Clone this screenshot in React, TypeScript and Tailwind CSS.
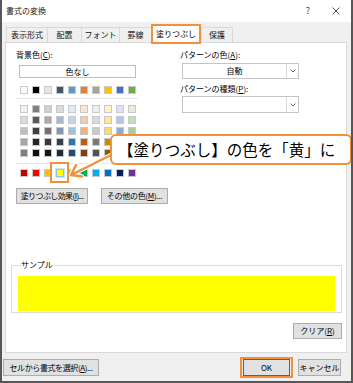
import React from 'react';

const themeRow = ['#ffffff', '#000000', '#e7e6e6', '#44546a', '#5b9bd5', '#ed7d31', '#a5a5a5', '#ffc000', '#4472c4', '#70ad47'];

const tintRows = [
    ['#f2f2f2', '#7f7f7f', '#d0cece', '#d6dce4', '#ddebf7', '#fce4d6', '#ededed', '#fff2cc', '#d9e1f2', '#e2efda'],
    ['#d9d9d9', '#595959', '#aeaaaa', '#acb9ca', '#bdd7ee', '#f8cbad', '#dbdbdb', '#ffe699', '#b4c6e7', '#c6e0b4'],
    ['#bfbfbf', '#404040', '#757171', '#8497b0', '#9bc2e6', '#f4b084', '#c9c9c9', '#ffd966', '#8ea9db', '#a9d08e'],
    ['#a6a6a6', '#262626', '#3a3838', '#333f4f', '#2f75b5', '#c65911', '#7b7b7b', '#bf8f00', '#305496', '#548235'],
    ['#808080', '#0d0d0d', '#161616', '#222b35', '#1f4e78', '#833c0c', '#525252', '#806000', '#203764', '#375623'],
];

const standardRow = ['#c00000', '#ff0000', '#ffc000', '#ffff00', '#92d050', '#00b050', '#00b0f0', '#0070c0', '#002060', '#7030a0'];

const tabs = [
    { label: '表示形式', w: 'w-[42px]' },
    { label: '配置', w: 'w-[35px]' },
    { label: 'フォント', w: 'w-[39px]' },
    { label: '罫線', w: 'w-[33px]' },
    { label: '塗りつぶし', w: 'w-[50px]', active: true },
    { label: '保護', w: 'w-[32px]' },
];

const Swatch: React.FC<{ color: string }> = ({ color }) => (
    <div className="w-[8px] h-[8px] border border-[#c8c8c8]" style={{ backgroundColor: color }} />
);

const Btn: React.FC<{ className?: string; children: React.ReactNode }> = ({ className = '', children }) => (
    <div className={`h-[16px] flex items-center justify-center whitespace-nowrap bg-[#e1e1e1] border border-[#adadad] ${className}`}>
        {children}
    </div>
);

const Select: React.FC<{ value?: string; className?: string }> = ({ value, className = '' }) => (
    <div className={`ml-[2px] w-[117px] flex bg-white border border-[#c4c4c4] ${className}`}>
        <div className="flex-1 flex items-center justify-center">{value}</div>
        <div className="w-[12px] border-l border-[#dadada] flex items-center justify-center">
            <svg width="6" height="4" viewBox="0 0 6 4">
                <path d="M0.5 0.5 L3 3 L5.5 0.5" fill="none" stroke="#606060" strokeWidth="0.9" />
            </svg>
        </div>
    </div>
);

const App: React.FC = () => {
    return (
        <div className="w-[353px] h-[383px] relative overflow-hidden whitespace-nowrap bg-[#f0f0f0] border-x-2 border-b-2 border-[#575757] font-['Noto_Sans_CJK_JP',sans-serif] text-[8px] leading-[10px] text-black">
            {/* title bar */}
            <div className="h-[22px] bg-white flex items-center pl-[4px]">
                <span className="text-[#222]">書式の変換</span>
                <span className="ml-auto text-[9px] text-[#444]">?</span>
                <svg className="ml-[22px] mr-[11px]" width="8" height="8" viewBox="0 0 8 8">
                    <path d="M0.5 0.5 L7.5 7.5 M7.5 0.5 L0.5 7.5" stroke="#333" strokeWidth="0.9" />
                </svg>
            </div>

            {/* tabs */}
            <div className="h-[20px] flex items-end pl-[4px]">
                {tabs.map(t => (
                    t.active ? (
                        <div key={t.label} className={`${t.w} h-[20px] -mb-[2px] relative z-10 bg-white border-2 border-[#f0923c] flex items-center justify-center`}>
                            {t.label}
                        </div>
                    ) : (
                        <div key={t.label} className={`${t.w} h-[15px] bg-[#f0f0f0] border-t border-l border-r border-[#d9d9d9] -mr-px flex items-center justify-center text-[#111]`}>
                            {t.label}
                        </div>
                    )
                ))}
            </div>

            {/* tab panel */}
            <div className="ml-[3px] w-[342px] h-[311px] border border-[#d9d9d9] bg-white">
                <div className="flex pt-[7px]">
                    {/* background colour */}
                    <div className="ml-[10px] w-[164px]">
                        <div>背景色(<u>C</u>):</div>
                        <div className="mt-[5px] ml-[3px] w-[117px] h-[13px] border border-[#bdbdbd] flex items-center justify-center">色なし</div>
                        <div className="mt-[8px] ml-[4px] grid grid-cols-10 gap-x-[4px] w-max">
                            {themeRow.map(c => <Swatch key={c} color={c} />)}
                        </div>
                        <div className="mt-[4px] w-[122px] h-px bg-[#e8e8e8]" />
                        <div className="mt-[6px] ml-[4px] grid grid-cols-10 gap-x-[4px] gap-y-[3px] w-max">
                            {tintRows.flat().map((c, i) => <Swatch key={i} color={c} />)}
                        </div>
                        <div className="mt-[6px] w-[122px] h-px bg-[#e8e8e8]" />
                        <div className="mt-[5px] ml-[4px] grid grid-cols-10 gap-x-[4px] w-max">
                            {standardRow.map((c, i) => (
                                i === 3 ? (
                                    <div key={c} className="relative">
                                        <div className="w-[8px] h-[8px] border border-[#8fc6ef] outline outline-1 outline-[#cde6f7]" style={{ backgroundColor: c }} />
                                        <div className="absolute -left-[6px] -top-[7px] w-[19px] h-[21px] border-2 border-[#f0923c]" />
                                    </div>
                                ) : <Swatch key={c} color={c} />
                            ))}
                        </div>
                        <div className="mt-[11px] flex gap-[13px]">
                            <Btn className="w-[72px] tracking-[-0.6px]">塗りつぶし効果(<u>I</u>)...</Btn>
                            <Btn className="w-[67px] tracking-[-0.3px]">その他の色(<u>M</u>)...</Btn>
                        </div>
                    </div>

                    {/* pattern */}
                    <div>
                        <div>パターンの色(<u>A</u>):</div>
                        <Select value="自動" className="mt-[3px] h-[16px]" />
                        <div className="mt-[5px]">パターンの種類(<u>P</u>):</div>
                        <Select className="mt-[2px] h-[17px]" />
                    </div>
                </div>

                {/* sample */}
                <fieldset className="mt-[56px] ml-[5px] w-[331px] h-[53px] border border-[#dcdcdc] px-[6px]">
                    <legend className="ml-[3px] leading-[10px]">サンプル</legend>
                    <div className="mt-[6px] h-[35px] bg-[#ffff00]" />
                </fieldset>

                <div className="mt-[10px] mr-[4px] flex justify-end">
                    <Btn className="w-[49px]">クリア(<u>R</u>)</Btn>
                </div>
            </div>

            {/* footer buttons */}
            <div className="mt-[4px] ml-[1px] mr-[10px] flex items-center">
                <Btn className="w-[96px] h-[17px] tracking-[-0.4px]">セルから書式を選択(<u>A</u>)...</Btn>
                <div className="ml-auto w-[53px] h-[21px] border-2 border-[#f0923c] flex items-center justify-center">
                    <div className="w-[47px] h-[17px] bg-[#e1e1e1] border border-[#0078d7] flex items-center justify-center">OK</div>
                </div>
                <Btn className="ml-[5px] w-[43px] h-[17px]">キャンセル</Btn>
            </div>

            {/* annotation arrow */}
            <svg className="absolute left-[58px] top-[145px]" width="60" height="40" viewBox="0 0 60 40">
                <g fill="none" strokeLinecap="round" strokeLinejoin="round">
                    <path d="M53 9 L11 30 M16 20 L11 30 L22 31.5" stroke="#ffffff" strokeWidth="4.5" />
                    <path d="M53 9 L11 30 M16 20 L11 30 L22 31.5" stroke="#f0923c" strokeWidth="2.5" />
                </g>
            </svg>

            {/* callout */}
            <div className="absolute left-[108px] top-[134px] w-[242px] h-[31px] bg-white border-2 border-[#f0923c] rounded-[6px] flex items-center pl-[6px] text-[15.5px] leading-none text-black">
                【塗りつぶし】の色を「黄」に
            </div>
        </div>
    );
};

export default App;
